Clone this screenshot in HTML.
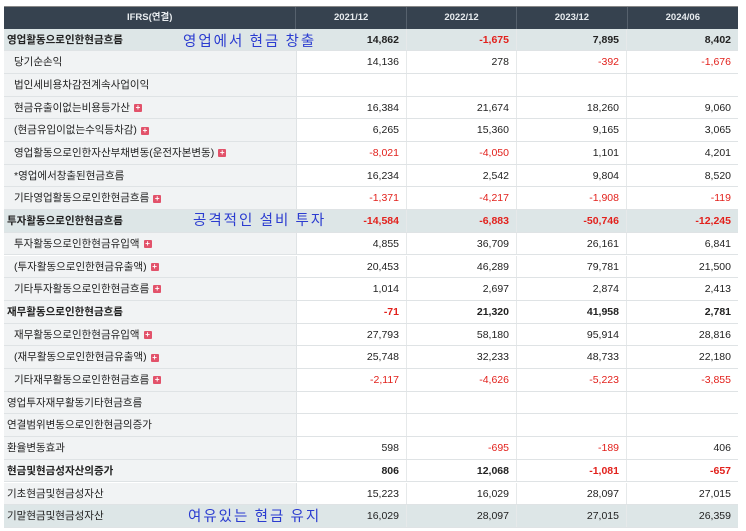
<!DOCTYPE html>
<html><head><meta charset="utf-8"><style>
body{margin:0;width:746px;height:531px;background:#fff;overflow:hidden;font-family:"Liberation Sans","Noto Sans CJK KR",sans-serif;font-size:10.5px;color:#222;position:relative}
.hd{position:absolute;left:4px;top:6px;width:734px;height:22px;background:#36424f;display:flex;border-top:1px solid #888}
.hd div{color:#e8ecef;font-size:9.5px;font-weight:bold;text-align:center;line-height:22px;border-left:1px solid #56616d}
.hd div:first-child{border-left:none}
.r{position:absolute;left:4px;width:734px;height:22.7px;display:flex;box-sizing:border-box;border-bottom:1px solid #dfe3e5}
.r div{line-height:22px;box-sizing:border-box;white-space:nowrap}
.l{width:293px;background:#f1f3f4;padding-left:10px;border-right:1px solid #dfe3e5}
.l.n{padding-left:3px}
.v{width:110px;text-align:right;padding-right:7px;border-right:1px solid #e6e9ea}
.v:last-child{width:111px;border-right:none}
.h .l,.h .v{background:#dde6e7}
.b{font-weight:bold}
.red{color:#e2211c}
.p{display:inline-block;width:8px;height:8px;background:#e2526a;color:#fff;font-size:8px;line-height:8px;text-align:center;vertical-align:middle;margin-left:4px;border-radius:1px;font-weight:bold}
.a{position:absolute;color:#2b3cd0;font-family:"Noto Sans CJK KR",sans-serif;font-size:14.5px;letter-spacing:2px;line-height:16px}
</style></head><body>
<div class="hd"><div style="width:293px">IFRS(연결)</div><div style="width:110px">2021/12</div><div style="width:110px">2022/12</div><div style="width:110px">2023/12</div><div style="width:111px">2024/06</div></div>

<div class="r h b" style="top:28.5px"><div class="l n">영업활동으로인한현금흐름</div><div class="v">14,862</div><div class="v red">-1,675</div><div class="v">7,895</div><div class="v">8,402</div></div>
<div class="r" style="top:51.2px"><div class="l">당기순손익</div><div class="v">14,136</div><div class="v">278</div><div class="v red">-392</div><div class="v red">-1,676</div></div>
<div class="r" style="top:73.9px"><div class="l">법인세비용차감전계속사업이익</div><div class="v"></div><div class="v"></div><div class="v"></div><div class="v"></div></div>
<div class="r" style="top:96.6px"><div class="l">현금유출이없는비용등가산<span class="p">+</span></div><div class="v">16,384</div><div class="v">21,674</div><div class="v">18,260</div><div class="v">9,060</div></div>
<div class="r" style="top:119.3px"><div class="l">(현금유입이없는수익등차감)<span class="p">+</span></div><div class="v">6,265</div><div class="v">15,360</div><div class="v">9,165</div><div class="v">3,065</div></div>
<div class="r" style="top:142px"><div class="l">영업활동으로인한자산부채변동(운전자본변동)<span class="p">+</span></div><div class="v red">-8,021</div><div class="v red">-4,050</div><div class="v">1,101</div><div class="v">4,201</div></div>
<div class="r" style="top:164.7px"><div class="l">*영업에서창출된현금흐름</div><div class="v">16,234</div><div class="v">2,542</div><div class="v">9,804</div><div class="v">8,520</div></div>
<div class="r" style="top:187.4px"><div class="l">기타영업활동으로인한현금흐름<span class="p">+</span></div><div class="v red">-1,371</div><div class="v red">-4,217</div><div class="v red">-1,908</div><div class="v red">-119</div></div>
<div class="r h b" style="top:210.1px"><div class="l n">투자활동으로인한현금흐름</div><div class="v red">-14,584</div><div class="v red">-6,883</div><div class="v red">-50,746</div><div class="v red">-12,245</div></div>
<div class="r" style="top:232.8px"><div class="l">투자활동으로인한현금유입액<span class="p">+</span></div><div class="v">4,855</div><div class="v">36,709</div><div class="v">26,161</div><div class="v">6,841</div></div>
<div class="r" style="top:255.5px"><div class="l">(투자활동으로인한현금유출액)<span class="p">+</span></div><div class="v">20,453</div><div class="v">46,289</div><div class="v">79,781</div><div class="v">21,500</div></div>
<div class="r" style="top:278.2px"><div class="l">기타투자활동으로인한현금흐름<span class="p">+</span></div><div class="v">1,014</div><div class="v">2,697</div><div class="v">2,874</div><div class="v">2,413</div></div>
<div class="r b" style="top:300.9px"><div class="l n">재무활동으로인한현금흐름</div><div class="v red">-71</div><div class="v">21,320</div><div class="v">41,958</div><div class="v">2,781</div></div>
<div class="r" style="top:323.6px"><div class="l">재무활동으로인한현금유입액<span class="p">+</span></div><div class="v">27,793</div><div class="v">58,180</div><div class="v">95,914</div><div class="v">28,816</div></div>
<div class="r" style="top:346.3px"><div class="l">(재무활동으로인한현금유출액)<span class="p">+</span></div><div class="v">25,748</div><div class="v">32,233</div><div class="v">48,733</div><div class="v">22,180</div></div>
<div class="r" style="top:369px"><div class="l">기타재무활동으로인한현금흐름<span class="p">+</span></div><div class="v red">-2,117</div><div class="v red">-4,626</div><div class="v red">-5,223</div><div class="v red">-3,855</div></div>
<div class="r" style="top:391.7px"><div class="l n">영업투자재무활동기타현금흐름</div><div class="v"></div><div class="v"></div><div class="v"></div><div class="v"></div></div>
<div class="r" style="top:414.4px"><div class="l n">연결범위변동으로인한현금의증가</div><div class="v"></div><div class="v"></div><div class="v"></div><div class="v"></div></div>
<div class="r" style="top:437.1px"><div class="l n">환율변동효과</div><div class="v">598</div><div class="v red">-695</div><div class="v red">-189</div><div class="v">406</div></div>
<div class="r b" style="top:459.8px"><div class="l n">현금및현금성자산의증가</div><div class="v">806</div><div class="v">12,068</div><div class="v red">-1,081</div><div class="v red">-657</div></div>
<div class="r" style="top:482.5px"><div class="l n">기초현금및현금성자산</div><div class="v">15,223</div><div class="v">16,029</div><div class="v">28,097</div><div class="v">27,015</div></div>
<div class="r h" style="top:505.2px"><div class="l n">기말현금및현금성자산</div><div class="v">16,029</div><div class="v">28,097</div><div class="v">27,015</div><div class="v">26,359</div></div>

<div class="a" style="left:183px;top:33px">영업에서 현금 창출</div>
<div class="a" style="left:193px;top:212px">공격적인 설비 투자</div>
<div class="a" style="left:188px;top:508px">여유있는 현금 유지</div>
</body></html>
